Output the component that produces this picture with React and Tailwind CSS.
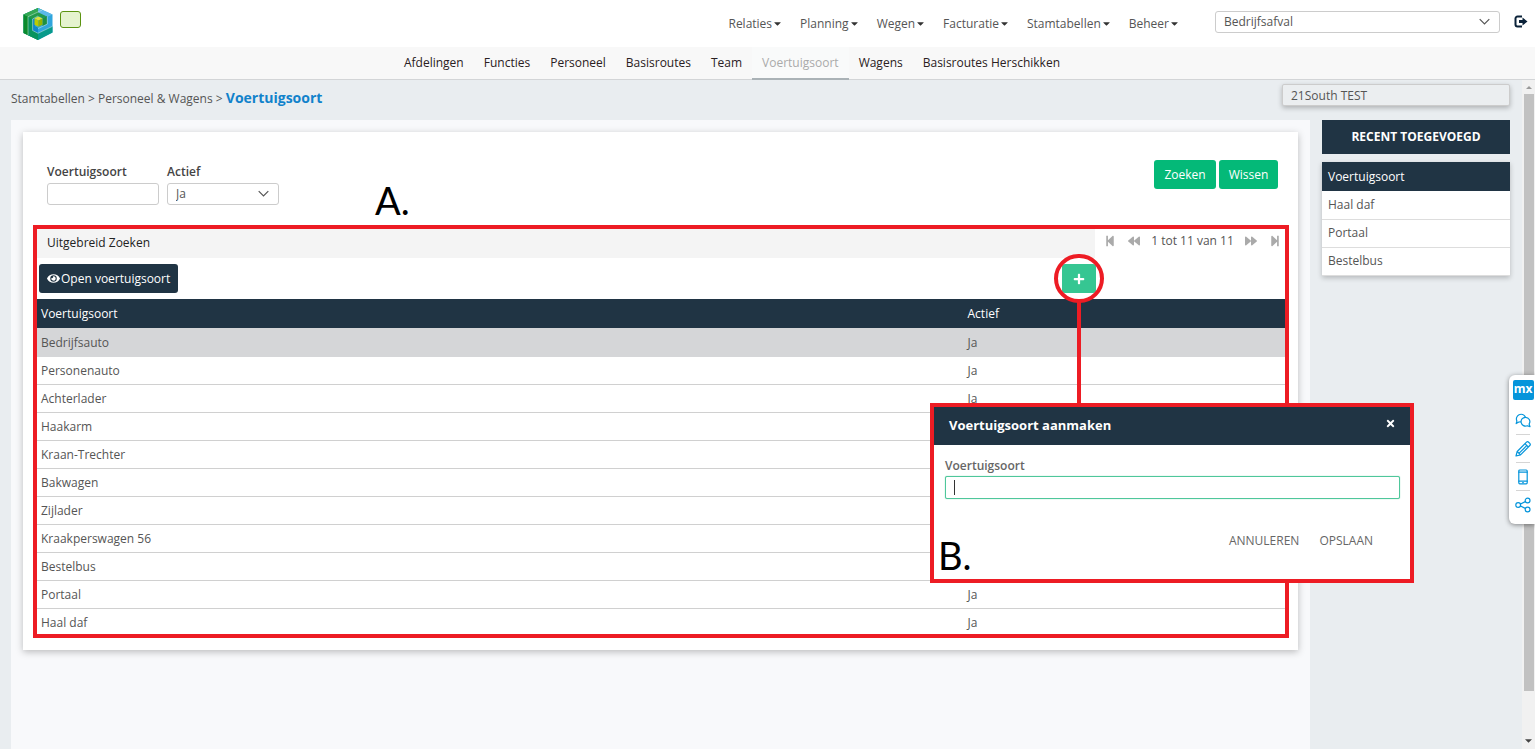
import React from "react";
import {
  FaCaretDown,
  FaPlus,
  FaTimes,
  FaEye,
  FaStepBackward,
  FaStepForward,
  FaBackward,
  FaForward,
} from "react-icons/fa";

const mainMenu = ["Relaties", "Planning", "Wegen", "Facturatie", "Stamtabellen", "Beheer"];

const subMenu = [
  "Afdelingen",
  "Functies",
  "Personeel",
  "Basisroutes",
  "Team",
  "Voertuigsoort",
  "Wagens",
  "Basisroutes Herschikken",
];

const vehicleTypes = [
  "Bedrijfsauto",
  "Personenauto",
  "Achterlader",
  "Haakarm",
  "Kraan-Trechter",
  "Bakwagen",
  "Zijlader",
  "Kraakperswagen 56",
  "Bestelbus",
  "Portaal",
  "Haal daf",
];

const recent = ["Haal daf", "Portaal", "Bestelbus"];

function Logo() {
  return (
    <svg className="h-8 w-[30px]" viewBox="0 0 30 32" role="img" aria-label="Logo">
      <path d="M15 0 29.500 6.500v18L15 32 .5 25V6.500Z" fill="#2fa5dd" />
      <path d="M15 0 .5 6.500V25L15 32V20l-3-1.500V10l8-4Z" fill="#159a55" />
      <path d="M.5 6.500 5 8.700v18.500L.5 25Z" fill="#0b8a2c" />
      <path d="M5 8.700 9.600 11v11.500L15 25.300V32L5 27.200Z" fill="#08935f" />
      <path d="M15 25.300 29.500 18.300v6.200L15 32Z" fill="#079a8a" />
      <path d="M.5 6.500 15 0l4.300 2L5 8.700Z" fill="#34a853" />
      <path d="M5 8.700 15 4l9 4-4.300 2.200L15 8l-5.400 3Z" fill="#239a4c" />
      <path d="M15 0 29.500 6.500 24.500 8.700 15 4.300Z" fill="#5cb8e8" />
      <path d="M9.600 11 12 10v8.500l3 1.700v5.100l-5.400-2.800Z" fill="#0f86cd" />
      <path d="M19.500 10.200 24 8v8l-4.500 2.200Z" fill="#1c8f45" />
      <path d="m11.500 10.500 4-2 4 2-4 2Z" fill="#dbe23a" />
      <path d="M11.500 10.500 15.500 12.500v6.300l-4-2Z" fill="#bccb00" />
      <path d="M15.500 12.500l4-2v6.300l-4 2Z" fill="#93b400" />
      <path
        d="M5 27V8.700L19 2.100M9.600 22.500V11L15 8M15 25.300l14.500-7M24.300 8.500v7.600L15 20.600M15 25.300l-5.400-2.800"
        fill="none"
        stroke="#e9f6ef"
        strokeOpacity=".75"
        strokeWidth=".6"
      />
    </svg>
  );
}

function LogOutIcon() {
  return (
    <svg className="h-[13px] w-[14px]" viewBox="0 0 14 13" aria-hidden="true">
      <path
        d="M8 1.500H3.500a2 2 0 0 0-2 2v6a2 2 0 0 0 2 2H8"
        fill="none"
        stroke="#0b2239"
        strokeWidth="2"
      />
      <path d="M5 5h3.500V2.500l5 4-5 4V8H5Z" fill="#0b2239" />
    </svg>
  );
}

function Chevron() {
  return (
    <svg
      className="pointer-events-none absolute top-[7px] right-[10px] h-[8px] w-[11px]"
      viewBox="0 0 11 8"
      fill="none"
      stroke="#555"
      strokeWidth="1.2"
      aria-hidden="true"
    >
      <path d="M.7 1.200 5.500 6 10.300 1.200" />
    </svg>
  );
}

function Header() {
  return (
    <header className="flex h-[47px] items-center bg-white pl-[23px] pr-[7px]">
      <a href="#home" aria-label="Home">
        <Logo />
      </a>
      <span className="mb-2 ml-[7px] h-[17px] w-[21px] rounded-[3px] border border-[#5b9311] bg-[#e5f3cf]" />
      <nav className="ml-auto flex gap-[17px]" aria-label="Hoofdmenu">
        {mainMenu.map((item) => (
          <button key={item} type="button" className="flex items-center text-[#555]">
            {item}
            <FaCaretDown className="size-[11px] text-[#333]" />
          </button>
        ))}
      </nav>
      <div className="relative ml-[35px] mb-[3px] w-[285px]">
        <select
          aria-label="Afdeling"
          className="block h-[22px] w-full appearance-none rounded-[3px] border border-[#ccc] bg-white px-2 text-[#555]"
        >
          <option>Bedrijfsafval</option>
        </select>
        <Chevron />
      </div>
      <button type="button" aria-label="Uitloggen" className="mb-1 ml-[14px]">
        <LogOutIcon />
      </button>
    </header>
  );
}

function SubMenu() {
  return (
    <nav
      className="flex h-[33px] justify-center border-b border-[#d3d5d7] bg-[#f8f8f8] pr-[71px]"
      aria-label="Submenu"
    >
      {subMenu.map((item) =>
        item === "Voertuigsoort" ? (
          <a
            key={item}
            href="#voertuigsoort"
            aria-current="page"
            className="-mb-px flex items-center border-b-2 border-[#aab2b6] bg-[#f9fafa] px-[10px] text-[#aaa]"
          >
            {item}
          </a>
        ) : (
          <a key={item} href="#menu" className="flex items-center px-[10px] text-[#2a2022]">
            {item}
          </a>
        ),
      )}
    </nav>
  );
}

function Filters() {
  return (
    <form className="flex items-start pr-5 pl-6" onSubmit={(e) => e.preventDefault()}>
      <div className="mt-1 w-28">
        <label htmlFor="filter-soort" className="block h-[19px] font-semibold text-[#444]">
          Voertuigsoort
        </label>
        <input
          id="filter-soort"
          className="block h-[22px] w-full rounded-[3px] border border-[#ccc] bg-white px-2"
        />
      </div>
      <div className="mt-1 ml-2 w-28">
        <label htmlFor="filter-actief" className="block h-[19px] font-semibold text-[#444]">
          Actief
        </label>
        <div className="relative">
          <select
            id="filter-actief"
            className="block h-[22px] w-full appearance-none rounded-[3px] border border-[#ccc] bg-white px-2 text-[#555]"
          >
            <option>Ja</option>
          </select>
          <Chevron />
        </div>
      </div>
      <p className="ml-24 pt-5 pb-[5px] font-[Lato] text-[38px] leading-10 text-black">A.</p>
      <div className="ml-auto flex gap-[3px]">
        <button type="submit" className="h-[29px] w-[62px] rounded-[3px] bg-[#04b978] text-white">
          Zoeken
        </button>
        <button type="reset" className="h-[29px] w-[59px] rounded-[3px] bg-[#04b978] text-white">
          Wissen
        </button>
      </div>
    </form>
  );
}

function Pager() {
  return (
    <div className="flex h-6 w-[190px] items-center justify-between pr-1 pl-[9px] text-[#aaa]">
      <button type="button" aria-label="Eerste pagina">
        <FaStepBackward className="size-3" />
      </button>
      <button type="button" aria-label="Vorige pagina">
        <FaBackward className="size-3" />
      </button>
      <span className="text-[#555]">1 tot 11 van 11</span>
      <button type="button" aria-label="Volgende pagina">
        <FaForward className="size-3" />
      </button>
      <button type="button" aria-label="Laatste pagina">
        <FaStepForward className="size-3" />
      </button>
    </div>
  );
}

function Grid() {
  return (
    <section className="mr-[9px] ml-[10px] overflow-hidden border-4 border-[#ed1c24]">
      <div className="flex">
        <div className="flex h-[29px] flex-1 items-center bg-[#f4f4f4] pb-[2px] pl-[10px] text-[#222]">
          Uitgebreid Zoeken
        </div>
        <Pager />
      </div>
      <div className="flex justify-between pt-[6px] pr-[189px] pb-[6px] pl-[2px]">
        <button
          type="button"
          className="flex h-[29px] items-center gap-px rounded-[3px] bg-[#203444] px-2 text-white"
        >
          <FaEye className="size-[13px]" />
          Open voertuigsoort
        </button>
        <div className="relative">
          <button
            type="button"
            aria-label="Voertuigsoort toevoegen"
            className="flex h-[29px] w-[34px] items-center justify-center rounded-[3px] bg-[#36c692] text-white"
          >
            <FaPlus className="size-3" />
          </button>
          <span className="absolute -top-[10px] -left-2 z-10 h-[49px] w-[50px] rounded-full border-4 border-[#ed1c24]" />
          <span className="absolute top-[38px] left-[15px] z-10 h-[104px] w-1 bg-[#ed1c24]" />
        </div>
      </div>
      <table className="-mb-[3px] w-full table-fixed border-collapse text-left">
        <thead>
          <tr className="h-[29px] bg-[#203444] text-white">
            <th className="w-[74%] px-1 font-normal">Voertuigsoort</th>
            <th className="px-[7px] font-normal">Actief</th>
          </tr>
        </thead>
        <tbody>
          {vehicleTypes.map((name, i) => (
            <tr
              key={name}
              className={
                i === 0
                  ? "h-7 border-b border-[#d5d6d8] bg-[#d5d6d8]"
                  : "h-7 border-b border-[#d0d0d0] bg-white"
              }
            >
              <td className="px-1 pt-[2px]">{name}</td>
              <td className="px-[7px] pt-[2px]">Ja</td>
            </tr>
          ))}
        </tbody>
      </table>
    </section>
  );
}

function RecentPanel() {
  return (
    <aside className="w-[188px]">
      <h2 className="flex h-[34px] items-center justify-center bg-[#203444] font-bold text-white">
        RECENT TOEGEVOEGD
      </h2>
      <table className="mt-2 w-full border-collapse bg-white text-left shadow-[0_2px_5px_rgba(0,0,0,0.22)]">
        <thead>
          <tr className="h-[29px] bg-[#203444] text-white">
            <th className="px-[6px] font-normal">Voertuigsoort</th>
          </tr>
        </thead>
        <tbody>
          {recent.map((name) => (
            <tr key={name} className="h-7 border-b border-[#ddd]">
              <td className="px-[6px]">{name}</td>
            </tr>
          ))}
        </tbody>
      </table>
    </aside>
  );
}

function ScrollTrack() {
  return (
    <div className="flex w-[13px] flex-col items-center bg-[#f1f1f1]" aria-hidden="true">
      <svg className="my-1 size-[6px]" viewBox="0 0 6 6">
        <path d="M0 5 3 2l3 3Z" fill="#999" />
      </svg>
      <span className="w-[10px] flex-1 bg-[#c1c1c1]" />
      <svg className="mt-[47px] mb-1 size-[7px]" viewBox="0 0 6 6">
        <path d="M0 1h6L3 4Z" fill="#444" />
      </svg>
    </div>
  );
}

function CreateDialog() {
  return (
    <div
      role="dialog"
      aria-label="Voertuigsoort aanmaken"
      className="absolute top-[403px] right-[121px] z-20 w-[484px] border-4 border-[#ed1c24] bg-white"
    >
      <div className="flex h-[38px] items-center justify-between bg-[#203444] pr-[14px] pb-[2px] pl-[15px] text-white">
        <h2 className="text-[13px] font-bold">Voertuigsoort aanmaken</h2>
        <button type="button" aria-label="Sluiten" className="mb-1">
          <FaTimes className="size-[11px]" />
        </button>
      </div>
      <div className="pt-[13px] pr-[10px] pl-[11px]">
        <label htmlFor="nieuw-soort" className="block h-[18px] font-semibold text-[#666]">
          Voertuigsoort
        </label>
        <div className="relative">
          <input
            id="nieuw-soort"
            className="block h-[23px] w-full rounded-[2px] border border-[#4fc79b] bg-white px-2 shadow-[0_0_1px_#4fc79b]"
          />
          <span className="absolute top-1 left-[9px] h-[15px] w-px bg-[#333]" />
        </div>
      </div>
      <div className="flex items-start justify-end pt-8 pr-[37px]">
        <p className="mr-auto pt-1 pb-1 pl-1 font-[Lato] text-[38px] leading-10 text-black">B.</p>
        <div className="flex gap-5 pt-[2px] text-[#666]">
          <button type="button">ANNULEREN</button>
          <button type="button">OPSLAAN</button>
        </div>
      </div>
    </div>
  );
}

const thin = {
  fill: "none",
  stroke: "#0595db",
  strokeWidth: 1.2,
  strokeLinecap: "round",
  strokeLinejoin: "round",
};

function FeedbackDock() {
  return (
    <div className="absolute top-[375px] right-0 z-20 flex w-[26px] flex-col items-center rounded-l-[6px] bg-white pt-[5px] pb-[6px] pl-[2px] shadow-[0_1px_5px_rgba(0,0,0,0.45)]">
      <span className="flex h-5 w-[21px] items-center justify-center rounded-[2px] bg-[#0595db] pb-[2px] text-[12px] leading-none font-bold text-white">
        mx
      </span>
      <button type="button" aria-label="Feedback" className="flex h-[34px] items-center pt-[6px]">
        <svg className="size-4" viewBox="0 0 16 16" {...thin}>
          <path d="M5.500 9.800 3.800 10 1.200 11.600 1.900 9A4.600 4.600 0 1 1 10.300 4.900" />
          <path d="M10.400 5.300a4.300 4.300 0 0 1 3.700 6.700l.9 2.600-2.700-.9a4.400 4.400 0 1 1-1.900-8.400Z" />
        </svg>
      </button>
      <span className="h-px w-[14px] bg-[#d5d5d5]" />
      <button type="button" aria-label="Bewerken" className="flex h-[27px] items-center">
        <svg className="size-4" viewBox="0 0 16 16" {...thin}>
          <path d="M1 15l1.200-4.500L11.500 1.200a1.500 1.500 0 0 1 2.100 0l1.200 1.200a1.500 1.500 0 0 1 0 2.100L5.500 13.800ZM2.200 10.500l3.300 3.300M10 2.700 13.300 6M4.200 12.200l7.400-7.500" />
        </svg>
      </button>
      <span className="h-px w-[14px] bg-[#d5d5d5]" />
      <button type="button" aria-label="Mobiele weergave" className="flex h-[27px] items-center">
        <svg className="h-4 w-[10px]" viewBox="0 0 10 16" {...thin}>
          <rect x=".8" y="1" width="8.400" height="13.800" rx="1" />
          <path d="M.8 3.200h8.400M.8 12.200h8.400M4.700 13.600h.6" />
        </svg>
      </button>
      <span className="h-px w-[14px] bg-[#d5d5d5]" />
      <button type="button" aria-label="Delen" className="flex h-[27px] items-center">
        <svg className="size-4" viewBox="0 0 16 16" {...thin}>
          <circle cx="3.200" cy="8" r="2.400" />
          <circle cx="12.600" cy="3.500" r="2.400" />
          <circle cx="12.600" cy="12.500" r="2.400" />
          <path d="M5.500 7 10.300 4.600M5.500 9l4.800 2.400" />
        </svg>
      </button>
    </div>
  );
}

export default function App() {
  return (
    <div className="relative flex min-h-screen flex-col overflow-hidden bg-[#e9edf0] font-['Open_Sans',sans-serif] text-[12px] leading-4 text-[#555]">
      <Header />
      <SubMenu />
      <div className="flex flex-1">
        <div className="flex flex-1 flex-col pr-3 pl-[11px]">
          <div className="flex h-10 items-start justify-between">
            <p className="pt-[10px]">
              <a href="#stamtabellen">Stamtabellen</a> &gt; <a href="#personeel">Personeel &amp; Wagens</a>{" "}
              &gt; <span className="text-[14px] font-bold text-[#1182cb]">Voertuigsoort</span>
            </p>
            <input
              aria-label="Omgeving"
              readOnly
              defaultValue="21South TEST"
              className="mt-1 h-[22px] w-[228px] rounded-[2px] border border-[#ccc] bg-[#ebeef0] px-2 shadow-[0_2px_5px_rgba(0,0,0,0.25)]"
            />
          </div>
          <div className="flex flex-1 gap-3">
            <main className="flex-1 bg-[#f8f9fb] p-3">
              <div className="bg-white pt-7 pb-3 shadow-[0_2px_7px_rgba(0,0,0,0.25)]">
                <Filters />
                <Grid />
              </div>
            </main>
            <RecentPanel />
          </div>
        </div>
        <ScrollTrack />
      </div>
      <CreateDialog />
      <FeedbackDock />
    </div>
  );
}
